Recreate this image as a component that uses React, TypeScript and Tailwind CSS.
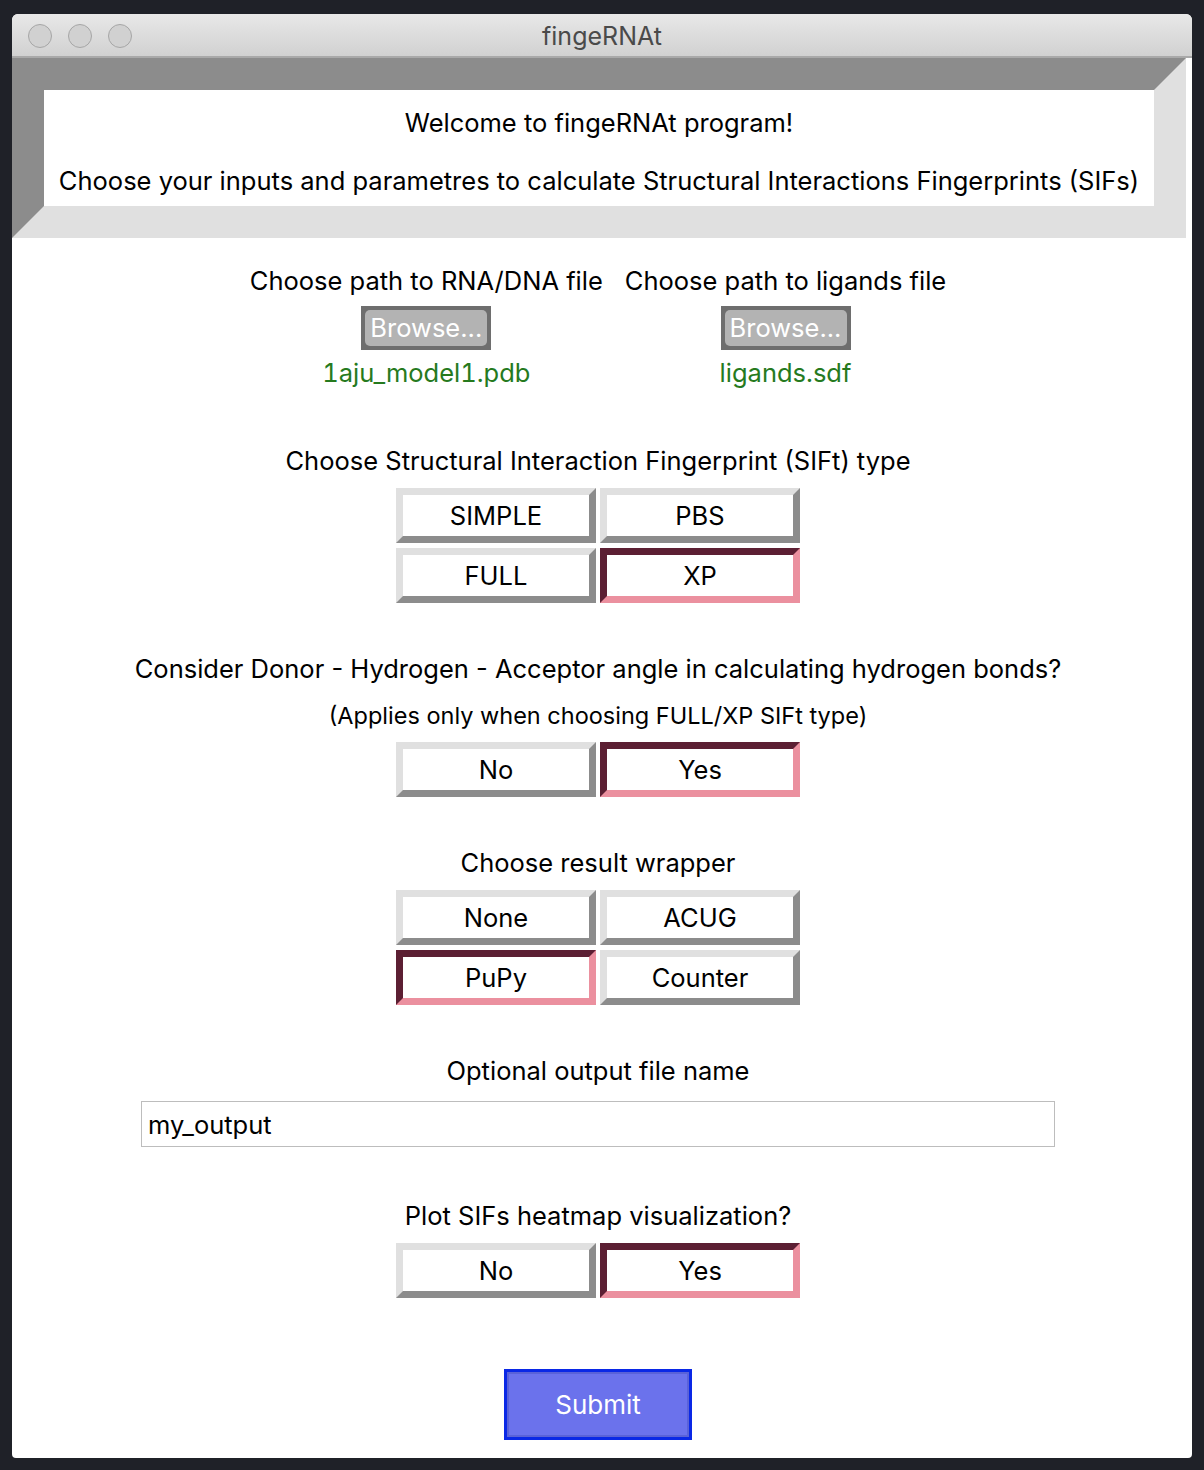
import { useState } from "react";

const font = { fontFamily: "Inter, 'Noto Sans', sans-serif" };

const ReliefButton = ({
  label,
  selected,
  onClick,
}: {
  label: string;
  selected: boolean;
  onClick: () => void;
}) => (
  <button
    onClick={onClick}
    className={
      "w-[200px] h-[55px] border-[7px] bg-white text-[25.5px] text-black leading-none flex items-center justify-center " +
      (selected
        ? "border-t-[#5c1f33] border-l-[#5c1f33] border-b-[#eb909f] border-r-[#eb909f]"
        : "border-t-[#e0e0e0] border-l-[#e0e0e0] border-b-[#8c8c8c] border-r-[#8c8c8c]")
    }
  >
    {label}
  </button>
);

const FileColumn = ({ title, file }: { title: string; file: string }) => (
  <div className="flex flex-col items-center">
    <p className="text-[25.5px] leading-[30px] text-black">{title}</p>
    <div className="mt-[10px] w-[130px] h-[44px] bg-[#6e6e6e] p-[4px]">
      <div className="w-full h-full rounded-[5px] bg-[#b3b3b3] text-white text-[25.5px] leading-[36px] text-center">
        Browse...
      </div>
    </div>
    <p className="mt-[8px] text-[25.5px] leading-[30px] text-[#267a1e] tabular-nums">{file}</p>
  </div>
);

const App = () => {
  const [sift, setSift] = useState("XP");
  const [angle, setAngle] = useState("Yes");
  const [wrapper, setWrapper] = useState("PuPy");
  const [plot, setPlot] = useState("Yes");
  const [output, setOutput] = useState("my_output");

  return (
    <div className="w-[1204px] h-[1470px] bg-[#1f2128] pt-[14px] pl-[12px]" style={font}>
      <div className="w-[1180px] h-[1444px] bg-white rounded-t-[6px] rounded-b-[4px] overflow-hidden flex flex-col">
        {/* title bar */}
        <div className="relative h-[44px] shrink-0 bg-gradient-to-b from-[#e8e8e8] to-[#d1d1d1] border-b-[2px] border-[#a9a9a9] flex items-center justify-center">
          <div className="absolute left-[16px] top-[10px] flex gap-[16px]">
            <span className="w-[24px] h-[24px] rounded-full bg-[#d1d1d1] border border-[#a6a6a6]" />
            <span className="w-[24px] h-[24px] rounded-full bg-[#d1d1d1] border border-[#a6a6a6]" />
            <span className="w-[24px] h-[24px] rounded-full bg-[#d1d1d1] border border-[#a6a6a6]" />
          </div>
          <span className="text-[25px] text-[#4a4a4a] mt-[4px]">fingeRNAt</span>
        </div>

        {/* welcome frame */}
        <div className="w-[1174px] h-[180px] shrink-0 border-[32px] border-t-[#8c8c8c] border-l-[#8c8c8c] border-b-[#e0e0e0] border-r-[#e0e0e0] bg-white flex flex-col items-center pt-[18px] text-[25.5px] leading-[30px] text-black">
          <p>Welcome to fingeRNAt program!</p>
          <p className="mt-[28px] whitespace-nowrap">
            Choose your inputs and parametres to calculate Structural Interactions Fingerprints (SIFs)
          </p>
        </div>

        <div className="w-[1172px] flex flex-col items-center">
          {/* files */}
          <div className="mt-[28px] flex gap-[22px]">
            <FileColumn title="Choose path to RNA/DNA file" file="1aju_model1.pdb" />
            <FileColumn title="Choose path to ligands file" file="ligands.sdf" />
          </div>

          {/* SIFt type */}
          <p className="mt-[58px] text-[25.5px] leading-[30px]">
            Choose Structural Interaction Fingerprint (SIFt) type
          </p>
          <div className="mt-[12px] grid grid-cols-2 gap-x-[4px] gap-y-[5px]">
            {["SIMPLE", "PBS", "FULL", "XP"].map((t) => (
              <ReliefButton key={t} label={t} selected={sift === t} onClick={() => setSift(t)} />
            ))}
          </div>

          {/* angle */}
          <p className="mt-[51px] text-[25.5px] leading-[30px]">
            Consider Donor - Hydrogen - Acceptor angle in calculating hydrogen bonds?
          </p>
          <p className="mt-[18px] text-[23.5px] leading-[28px]">
            (Applies only when choosing FULL/XP SIFt type)
          </p>
          <div className="mt-[12px] grid grid-cols-2 gap-x-[4px]">
            {["No", "Yes"].map((t) => (
              <ReliefButton key={t} label={t} selected={angle === t} onClick={() => setAngle(t)} />
            ))}
          </div>

          {/* wrapper */}
          <p className="mt-[51px] text-[25.5px] leading-[30px]">Choose result wrapper</p>
          <div className="mt-[12px] grid grid-cols-2 gap-x-[4px] gap-y-[5px]">
            {["None", "ACUG", "PuPy", "Counter"].map((t) => (
              <ReliefButton key={t} label={t} selected={wrapper === t} onClick={() => setWrapper(t)} />
            ))}
          </div>

          {/* output name */}
          <p className="mt-[51px] text-[25.5px] leading-[30px]">Optional output file name</p>
          <input
            value={output}
            onChange={(e) => setOutput(e.target.value)}
            className="mt-[15px] w-[914px] h-[46px] border border-[#bdbdbd] px-[6px] text-[25.5px] text-black outline-none self-start ml-[129px]"
          />

          {/* plot */}
          <p className="mt-[54px] text-[25.5px] leading-[30px]">Plot SIFs heatmap visualization?</p>
          <div className="mt-[12px] grid grid-cols-2 gap-x-[4px]">
            {["No", "Yes"].map((t) => (
              <ReliefButton key={t} label={t} selected={plot === t} onClick={() => setPlot(t)} />
            ))}
          </div>

          <button className="mt-[71px] w-[188px] h-[71px] border-[3px] border-[#0a28e6] bg-[#6b72ec] text-white text-[26px] shadow-[inset_0_0_0_2px_#5a62d8]">
            Submit
          </button>
        </div>
      </div>
    </div>
  );
};

export default App;
